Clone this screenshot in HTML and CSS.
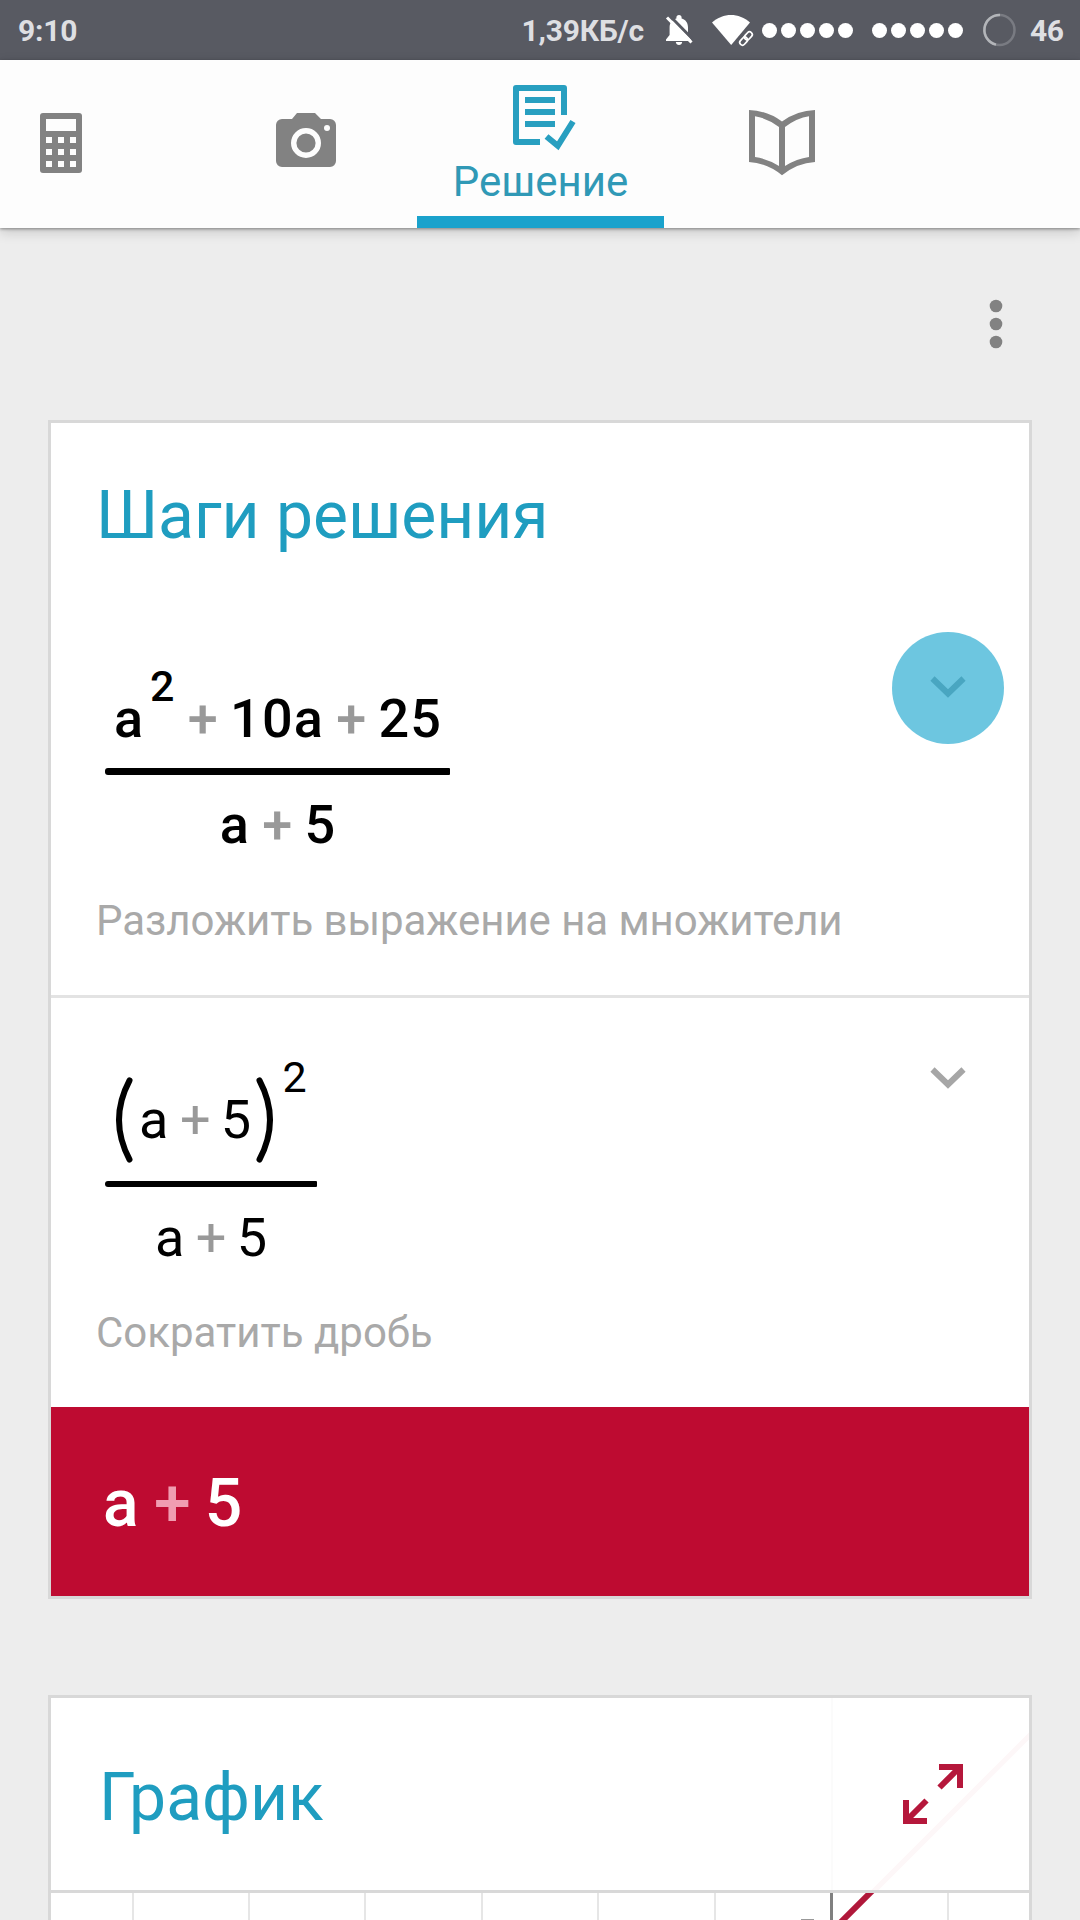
FILE: index.html
```html
<!DOCTYPE html>
<html lang="ru">
<head>
<meta charset="utf-8">
<title>Решение</title>
<link rel="stylesheet" href="styles.css">
</head>
<body>
<header class="status">
  <span class="clock">9:10</span>
  <span class="speed">1,39КБ/с</span>
  <svg class="bell" width="28" height="32" viewBox="0 0 28 32">
    <path fill="#fff" d="M14 1c1.6 0 2.6 1 2.6 2.6v1C20.600 5.600 23 9 23 13.500V21l3.200 4.500v1.500H1v-1.500L4.600 21v-7.500c0-4.500 2.800-7.900 6.800-8.900v-1C11.400 2 12.400 1 14 1zM10.800 28h6.400c-.2 1.800-1.500 3-3.200 3s-3-1.200-3.200-3z"/>
    <path stroke="#585a62" stroke-width="3" d="M4.500 1.500 28 25.500"/>
    <path stroke="#fff" stroke-width="3" d="M2 3.500 26.500 28.500"/>
  </svg>
  <svg class="wifi" width="42" height="32" viewBox="0 0 42 32">
    <path fill="#fff" d="M0 8.500C11-1.600 27-1.600 38 8.500L19.200 31z"/>
    <path fill="none" stroke="#585a62" stroke-width="5" d="M29 27 38 19"/>
    <g fill="none" stroke="#fff" stroke-width="1.700" transform="rotate(-48 34 24.500)">
      <rect x="26" y="21.800" width="9" height="5.400" rx="2.700"/><rect x="33" y="21.800" width="9" height="5.400" rx="2.700"/>
    </g>
  </svg>
  <div class="signal"><i></i><i></i><i></i><i></i><i></i></div>
  <div class="signal"><i></i><i></i><i></i><i></i><i></i></div>
  <svg class="ring" width="33" height="34" viewBox="0 0 33 34" fill="none" stroke-width="2.500">
    <circle cx="16.500" cy="17" r="15" stroke="#797b82"/>
    <path stroke="#b3b5b9" d="M17 2A15 15 0 0 0 13 31.600"/>
  </svg>
  <span class="battery">46</span>
</header>

<nav class="tabs">
  <a class="tab calc">
    <svg width="42" height="60" viewBox="0 0 42 60"><rect width="42" height="60" rx="3" fill="#828282"/>
      <path fill="#fdfdfd" d="M6 6h30v12H6zM6 24h6v6H6zM18 24h6v6h-6zM30 24h6v6h-6zM6 36h6v6H6zM18 36h6v6h-6zM30 36h6v6h-6zM6 48h6v6H6zM18 48h6v6h-6zM30 48h6v6h-6z"/></svg>
  </a>
  <a class="tab camera">
    <svg width="60" height="54" viewBox="0 0 60 54"><path fill="#828282" d="M6 6h10l5-6h18l6 6h9a6 6 0 0 1 6 6v36a6 6 0 0 1-6 6H6a6 6 0 0 1-6-6V12a6 6 0 0 1 6-6z"/>
      <circle cx="30" cy="30" r="12.300" fill="none" stroke="#fdfdfd" stroke-width="5.400"/><circle cx="51" cy="15" r="3" fill="#fdfdfd"/></svg>
  </a>
  <a class="tab active">
    <svg class="doc" width="55" height="66" viewBox="0 0 55 66" fill="none" stroke="#289fc0" stroke-width="6">
      <path stroke-linejoin="round" d="M51 30V3H3v54h24"/><path d="M12 15h30M12 27h30M12 39h30M33.500 51.500 44.800 60.800 60 36.500"/></svg>
    <span class="tab-label">Решение</span>
  </a>
  <a class="tab book">
    <svg width="66" height="66" viewBox="0 0 66 66">
      <path fill="#828282" fill-rule="evenodd" d="M0 0Q18 .5 33 11.500Q48 .5 66 0V52Q48 53 33 65.300Q18 53 0 52zM6 6.300V47Q18 48.500 30 56V17Q18 8 6 6.300zM60 6.300V47Q48 48.500 36 56V17Q48 8 60 6.300z"/></svg>
  </a>
</nav>

<main class="content">
  <div class="toolbar"><svg width="14" height="50" viewBox="0 0 14 50" fill="#828282"><circle cx="7" cy="7" r="6.300"/><circle cx="7" cy="25" r="6.300"/><circle cx="7" cy="43" r="6.300"/></svg></div>

  <section class="card">
    <h2 class="title">Шаги решения</h2>
    <article class="step first">
      <div class="step-body">
        <div class="fraction bold">
          <div class="row numerator"><span>a</span><span class="sup">2</span><span class="op">+</span><span>1</span><span>0</span><span>a</span><span class="op">+</span><span>2</span><span>5</span></div>
          <div class="bar"></div>
          <div class="row denominator"><span>a</span><span class="op">+</span><span>5</span></div>
        </div>
        <p class="caption">Разложить выражение на множители</p>
      </div>
      <div class="toggle on"><svg width="40" height="26" viewBox="0 0 40 26"><path d="M4.500 4.500 20 19.500l15.500-15"/></svg></div>
    </article>
    <article class="step second">
      <div class="step-body">
        <div class="fraction regular">
          <div class="row numerator">
            <svg class="paren open" width="17" height="86" viewBox="0 0 17 86"><path d="M13.500 3.500Q-7.500 43 13.500 82.500"/></svg><span>a</span><span class="op">+</span><span>5</span><svg class="paren close" width="17" height="86" viewBox="0 0 17 86"><path d="M3.500 3.500Q24.500 43 3.500 82.500"/></svg><span class="sup">2</span>
          </div>
          <div class="bar"></div>
          <div class="row denominator"><span>a</span><span class="op">+</span><span>5</span></div>
        </div>
        <p class="caption">Сократить дробь</p>
      </div>
      <div class="toggle"><svg width="40" height="26" viewBox="0 0 40 26"><path d="M4.500 4.500 20 19.500l15.500-15"/></svg></div>
    </article>
    <div class="result"><span>a</span><span class="op">+</span><span>5</span></div>
  </section>

  <section class="card graph-card">
    <div class="graph-head">
      <svg class="ghost" width="978" height="192" viewBox="0 0 978 192" fill="none"><path stroke="#fbfbfb" stroke-width="2" d="M781 0v192"/><path stroke="#fdf7f8" stroke-width="5" d="M822 194 980 36"/></svg>
      <h2 class="title">График</h2>
      <svg class="expand" width="60" height="60" viewBox="0 0 60 60" fill="none" stroke="#b5173b" stroke-width="6"><path d="M36 3h21v21M36.500 23.500 57 3M3 36v21h21M23.500 36.500 3 57"/></svg>
    </div>
    <svg class="graph" width="978" height="27" viewBox="0 0 978 27" fill="none">
      <path stroke="#e6e6e6" stroke-width="2" d="M82 0v27M198 0v27M314 0v27M431 0v27M547 0v27M664 0v27M897 0v27"/>
      <path stroke="#808080" stroke-width="3" d="M780.500 0v27"/>
      <path stroke="#999" stroke-width="2" d="M750 27h13"/>
      <path stroke="#b0183a" stroke-width="6" d="M824-5 759 60"/>
    </svg>
  </section>
</main>
</body>
</html>
```

FILE: styles.css
```css
* { box-sizing: border-box; margin: 0; padding: 0; }
html { overflow: hidden; }
body {
  width: 1080px;
  height: 1920px;
  overflow: hidden;
  background: #ededed;
  font-family: Roboto, sans-serif;
}
svg { display: block; flex: none; overflow: visible; }

/* Status bar */
.status {
  display: flex;
  height: 60px;
  padding: 13px 0 0 18px;
  background: #585a62;
  color: #dedfe2;
  font-size: 30px;
  font-weight: 700;
  line-height: 35px;
  white-space: nowrap;
}
.clock { width: 503.500px; letter-spacing: -.2px; }
.speed { width: 143.500px; letter-spacing: -.2px; }
.bell { margin-top: 1px; }
.wifi { margin: 1px 0 0 19px; }
.signal { display: flex; gap: 3.500px; width: 92px; margin: 9.500px 0 0 7.500px; }
.signal + .signal { margin-left: 18px; }
.signal i { flex: none; width: 15.500px; height: 15.500px; border-radius: 50%; background: #fff; }
.ring { margin-left: 19.500px; }
.battery { margin-left: 14px; letter-spacing: -.5px; }

/* Tabs */
.tabs {
  position: relative;
  display: grid;
  grid-template-columns: 195px 222px 247px 236px;
  height: 168px;
  background: #fdfdfd;
  box-shadow: 0 1px 3px rgba(0, 0, 0, .38), 0 4px 12px rgba(0, 0, 0, .16);
}
.tab { display: flex; flex-direction: column; align-items: center; }
.calc { align-items: flex-start; padding: 53px 0 0 40px; }
.camera { padding-top: 53px; }
.active { padding-top: 25px; border-bottom: 12px solid #1aa2cc; }
.book { padding-top: 50px; }
.tab-label { margin-top: 6px; color: #3099b6; font-size: 42px; line-height: 49px; }

.toolbar { display: flex; justify-content: flex-end; height: 192px; padding: 71px 77px 0 0; }

/* Cards */
.card { width: 984px; margin-left: 48px; border: 3px solid #d8d8d8; background: #fff; }
.title { color: #1f9dc0; font-size: 66px; font-weight: 400; line-height: 77px; }
.card > .title { padding: 54px 0 0 45px; letter-spacing: -.05px; }

/* Solution steps */
.step { display: flex; justify-content: space-between; padding-left: 45px; padding-right: 25px; }
.first { height: 444px; padding-top: 78px; border-bottom: 3px solid #e3e3e3; }
.second { height: 409px; padding-top: 24px; }
.fraction {
  display: inline-flex;
  flex-direction: column;
  margin-left: 9px;
  color: #000;
  font-size: 54px;
  line-height: 63px;
  vertical-align: top;
}
.bold { width: 345px; margin-top: 55px; font-weight: 500; }
.regular { width: 212px; margin-top: 66px; }
.row { display: flex; height: 63px; }
.numerator { padding-left: 9px; }
.regular .numerator { padding-left: 11px; }
.denominator { justify-content: center; }
.row span + span { margin-left: 1.200px; }
.row .op { margin-right: 11px; color: #999; }
.row span + .op { margin-left: 13.300px; }
.regular .row span + .op { margin-left: 11.500px; }
.regular .row .op { margin-right: 9px; }
.row .sup { align-self: flex-start; font-size: 43px; line-height: 50px; }
.bold .row .sup { margin: -26px 0 0 7px; }
.regular .row .sup { margin: -36px 0 0 9.500px; }
.bar { height: 7px; margin: 18px 0; border-radius: 3px 1px 1px 3px; background: #000; }
.regular .bar { height: 6px; margin: 30px 0 19px; }
.paren { margin-top: -11px; fill: none; stroke: #000; stroke-width: 6; stroke-linecap: round; }
.open { margin-right: 6px; }
.close { margin-left: 5px; }
.caption { margin-top: 40px; color: #a9a9a9; font-size: 42px; line-height: 49px; letter-spacing: -.06px; white-space: nowrap; }
.second .caption { margin-top: 39px; letter-spacing: 0; }

.toggle { display: flex; justify-content: center; flex: none; width: 112px; height: 112px; padding-top: 42px; border-radius: 50%; }
.toggle path { fill: none; stroke: #a6a6a6; stroke-width: 6; }
.toggle.on { background: #6dc6e0; }
.toggle.on path { stroke: #49a6c1; }
.second .toggle { padding-top: 43px; }

.result {
  display: flex;
  height: 189px;
  padding: 58px 0 0 52px;
  background: #be0b31;
  color: #fff;
  font-size: 66px;
  font-weight: 500;
  line-height: 77px;
}
.result .op { margin: 0 14px 0 15.500px; color: #f09db1; }

/* Graph */
.graph-card { height: 225px; margin-top: 96px; border-bottom: 0; }
.graph-head {
  position: relative;
  z-index: 0;
  display: flex;
  justify-content: space-between;
  height: 195px;
  padding: 61px 66px 0 48px;
  border-bottom: 3px solid #d8d8d8;
  overflow: hidden;
}
.ghost { position: absolute; left: 0; top: 0; z-index: -1; }
.expand { margin-top: 5px; }
.graph { overflow: hidden; }
```
